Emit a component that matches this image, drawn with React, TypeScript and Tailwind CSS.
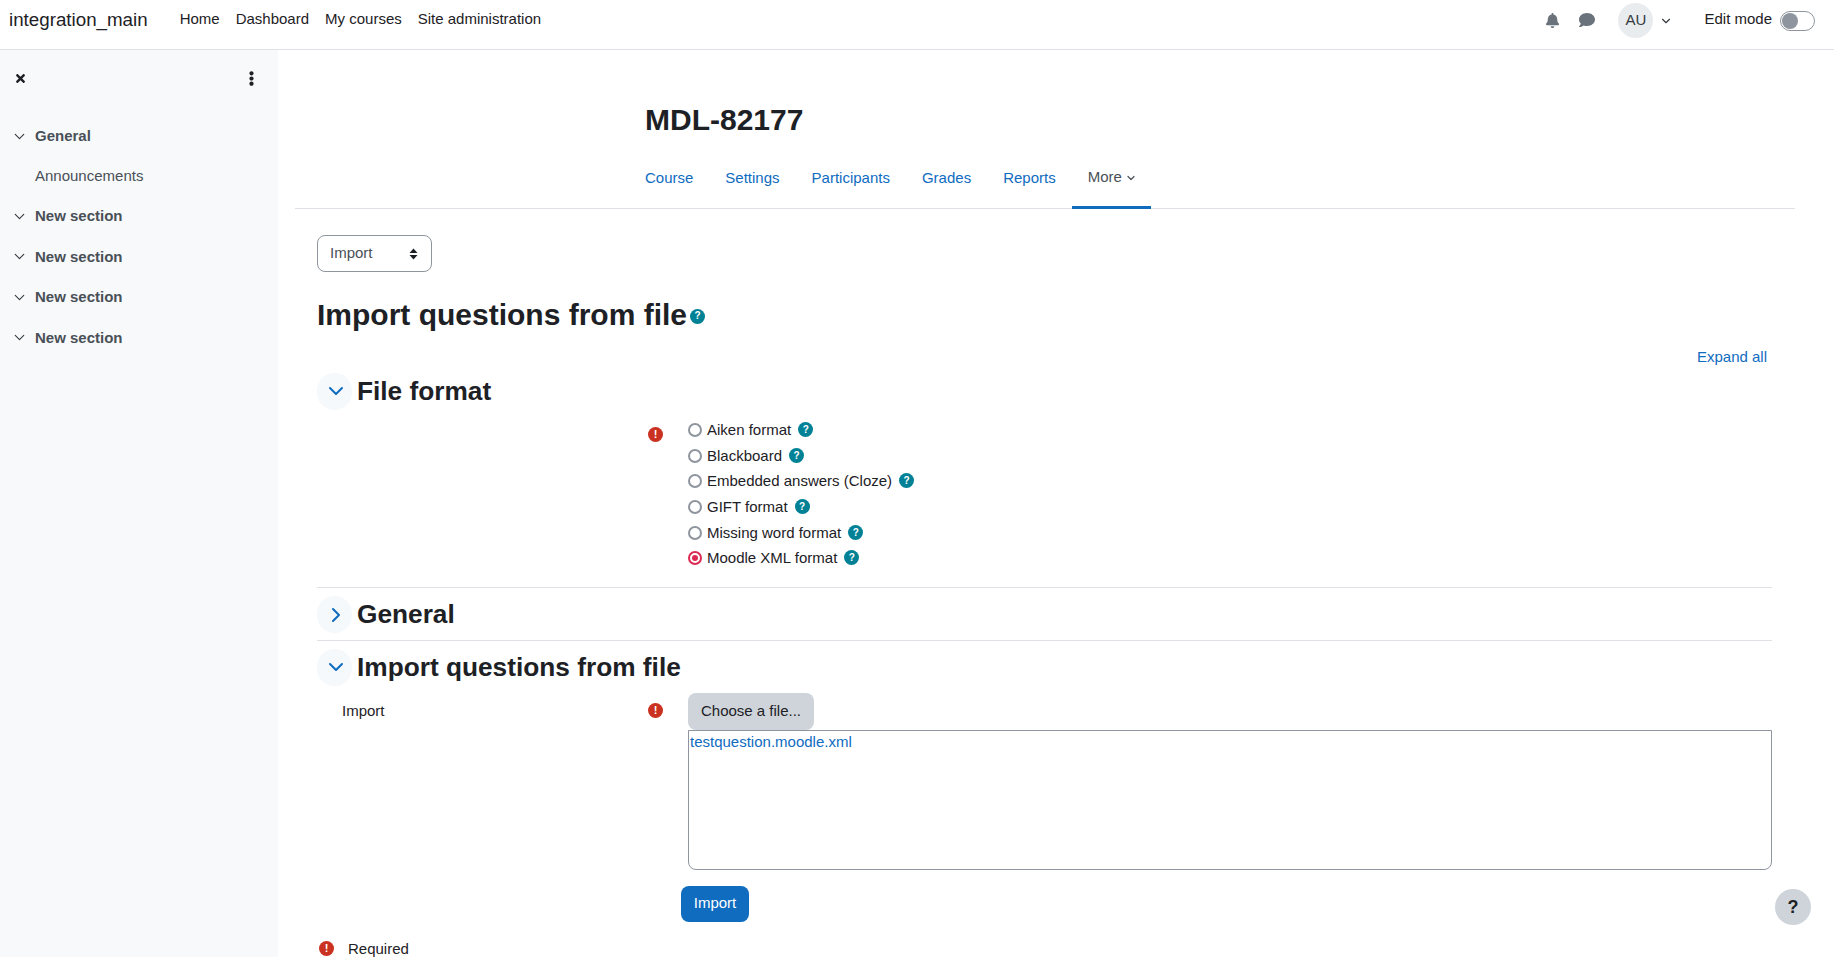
import { ChevronDown, ChevronRight } from "lucide-react";
import { FaBell, FaComment, FaEllipsisV, FaTimes } from "react-icons/fa";

const navLinks = ["Home", "Dashboard", "My courses", "Site administration"];
const sidebarSections = ["New section", "New section", "New section", "New section"];
const tabs = ["Course", "Settings", "Participants", "Grades", "Reports"];
const formats = [
  { label: "Aiken format", top: "mt-0" },
  { label: "Blackboard", top: "mt-[3px]" },
  { label: "Embedded answers (Cloze)", top: "mt-[2px]" },
  { label: "GIFT format", top: "mt-[3px]" },
  { label: "Missing word format", top: "mt-[3px]" },
  { label: "Moodle XML format", top: "mt-[2px]", checked: true },
];

function HelpIcon({ className }: { className: string }) {
  return (
    <span className={`flex items-center justify-center w-[15px] h-[15px] rounded-full bg-[#008196] text-white text-[10px] font-bold leading-none ${className}`}>?</span>
  );
}

function RequiredIcon({ className }: { className: string }) {
  return (
    <span className={`flex items-center justify-center shrink-0 w-[15px] h-[15px] rounded-full bg-[#ca3120] text-white text-[11px] font-bold leading-none ${className}`}>!</span>
  );
}

function SidebarHeading({ title }: { title: string }) {
  return (
    <div className="flex items-center h-[40.4px] pl-[11px]">
      <ChevronDown size={17} strokeWidth={1.6} className="text-[#343a40]" />
      <span className="ml-[7px] font-bold text-[#495057]">{title}</span>
    </div>
  );
}

function SectionHeading({ title, open }: { title: string; open: boolean }) {
  return (
    <div className="flex items-center h-[37px]">
      <div className="flex items-center justify-center w-[35px] h-[37px] rounded-full bg-[#f5f9fc] text-[#0f6cbf]">
        {open ? <ChevronDown size={24} strokeWidth={2} className="ml-[2px]" /> : <ChevronRight size={24} strokeWidth={2} className="ml-[3px]" />}
      </div>
      <h3 className="ml-[5px] text-[26.25px] font-bold text-[#1d2125] leading-none">{title}</h3>
    </div>
  );
}

export default function App() {
  return (
    <div className="relative h-[957px] overflow-hidden bg-white text-[15px] text-[#1d2125] font-['Liberation_Sans',sans-serif]">
      <nav className="flex items-center h-[50px] pl-[9px] pr-[19px] pb-[8px] border-b border-[#dee2e6]">
        <a className="text-[18.75px] mr-[16px]">integration_main</a>
        <div className="flex mt-[-3px] ml-[16px] gap-[16px]">
          {navLinks.map((l) => (
            <a key={l}>{l}</a>
          ))}
        </div>
        <div className="flex items-center ml-auto text-[#6a737b]">
          <FaBell size={15} className="mr-[19px] mt-[-1px]" />
          <FaComment size={16} className="mr-[23px] mt-[-1px]" />
          <div className="flex items-center justify-center w-[35px] h-[35px] rounded-full bg-[#e9ecef] text-[#343a40]">AU</div>
          <ChevronDown size={14} strokeWidth={2} className="ml-[6px] text-[#343a40]" />
          <span className="ml-[31px] mt-[-3px] text-[#1d2125]">Edit mode</span>
          <div className="ml-[8px] flex items-center w-[35px] h-[20px] rounded-full border border-[#8f959e] bg-white">
            <div className="w-[16px] h-[16px] ml-[1px] rounded-full bg-[#8f959e]" />
          </div>
        </div>
      </nav>

      <div className="flex">
        <aside className="w-[278px] h-[907px] shrink-0 bg-[#f8f9fa]">
          <div className="flex items-center justify-between h-[56px] pl-[14px] pr-[19px]">
            <FaTimes size={13} className="mt-[1px]" />
            <FaEllipsisV size={15} className="mt-[1px]" />
          </div>
          <div className="mt-[10px]">
            <SidebarHeading title="General" />
            <div className="flex items-center h-[40px] pl-[35px] text-[#495057]">Announcements</div>
            {sidebarSections.map((s, i) => (
              <SidebarHeading key={i} title={s} />
            ))}
          </div>
        </aside>

        <main className="flex-1 pl-[17px] pr-[39px]">
          <div className="pl-[350px] pt-[55px]">
            <h1 className="text-[30px] font-bold leading-none h-[36px]">MDL-82177</h1>
          </div>
          <div className="flex h-[68px] pt-[8px] pl-[334px] border-b border-[#dee2e6]">
            {tabs.map((t) => (
              <a key={t} className="flex items-center px-[16px] text-[#0f6cbf]">
                {t}
              </a>
            ))}
            <a className="flex items-center pl-[16px] pr-[14px] border-b-[3px] mb-[-1px] border-[#0f6cbf] text-[#495057]">
              More
              <ChevronDown size={12} strokeWidth={2.4} className="ml-[3px]" />
            </a>
          </div>

          <div className="pl-[22px] pr-[23px]">
            <div className="flex items-center justify-between w-[115px] h-[37px] mt-[26px] px-[12px] rounded-[8px] border border-[#8f959e] text-[#495057]">
              Import
              <svg width="9" height="12" viewBox="0 0 9 12" className="mr-[1px] text-[#1d2125]">
                <path d="M4.5 0.5 8.5 5H0.5ZM4.5 11.5 0.5 7H8.5Z" fill="currentColor" />
              </svg>
            </div>

            <div className="flex items-center h-[36px] mt-[25px]">
              <h2 className="text-[30px] font-bold leading-none">Import questions from file</h2>
              <HelpIcon className="ml-[3px] mt-[2px]" />
            </div>

            <div className="flex justify-end mt-[13px] pr-[5px] text-[#0f6cbf]">Expand all</div>

            <div className="mt-[4px]">
              <SectionHeading title="File format" open />
            </div>
            <div className="flex mt-[9px] h-[169px] border-b border-[#dee2e6]">
              <div className="w-[331px] shrink-0" />
              <RequiredIcon className="mt-[8px]" />
              <div className="ml-[25px]">
                {formats.map((f) => (
                  <div key={f.label} className={`flex items-center h-[23px] ${f.top}`}>
                    {f.checked ? (
                      <span className="flex items-center justify-center w-[14px] h-[14px] rounded-full border-2 border-[#db2a53]">
                        <span className="w-[6px] h-[6px] rounded-full bg-[#db2a53]" />
                      </span>
                    ) : (
                      <span className="w-[14px] h-[14px] rounded-full border-2 border-[#8f959e]" />
                    )}
                    <span className="ml-[5px]">{f.label}</span>
                    <HelpIcon className="ml-[7px] mt-[-1px]" />
                  </div>
                ))}
              </div>
            </div>

            <div className="flex items-center h-[53px] pt-[2px] border-b border-[#dee2e6]">
              <SectionHeading title="General" open={false} />
            </div>

            <div className="mt-[8px]">
              <SectionHeading title="Import questions from file" open />
            </div>
            <div className="flex mt-[7px]">
              <div className="w-[339px] shrink-0 pl-[25px] pt-[7px]">Import</div>
              <RequiredIcon className="mt-[10px] ml-[-8px]" />
              <div className="ml-[25px] flex-1">
                <div className="flex items-center justify-center w-[126px] h-[37px] rounded-[8px] bg-[#ced4da] text-[#1d2125]">Choose a file...</div>
                <div className="h-[140px] px-[1px] border border-[#8f959e] rounded-b-[8px] text-[#0f6cbf] leading-[22px]">testquestion.moodle.xml</div>
              </div>
            </div>

            <div className="pl-[364px] mt-[16px]">
              <div className="flex items-center justify-center w-[68px] h-[36px] rounded-[8px] bg-[#0f6cbf] text-white">Import</div>
            </div>

            <div className="flex items-center mt-[16px]">
              <RequiredIcon className="ml-[2px]" />
              <span className="ml-[14px]">Required</span>
            </div>
          </div>
        </main>
      </div>

      <div className="absolute left-[1775px] top-[889px] flex items-center justify-center w-[36px] h-[36px] rounded-full bg-[#ced4da] text-[18px] font-bold text-[#1d2125]">?</div>
    </div>
  );
}
